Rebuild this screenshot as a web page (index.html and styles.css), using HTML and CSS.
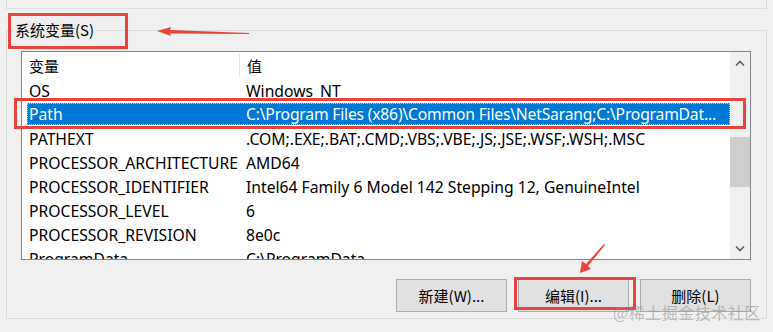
FILE: index.html
```html
<!DOCTYPE html>
<html lang="zh-CN">
<head>
    <meta charset="UTF-8">
    <title>系统变量</title>
    <link rel="stylesheet" href="styles.css">
</head>
<body>
    <div class="prev-group"></div>

    <fieldset class="group">
        <legend>系统变量(S)</legend>

        <div class="listbox">
            <div class="list-body">
                <div class="row head">
                    <span class="col-name">变量</span>
                    <span class="col-value">值</span>
                </div>
                <div class="row"><span>OS</span><span>Windows_NT</span></div>
                <div class="row selected"><span>Path</span><span class="long">C:\Program Files (x86)\Common Files\NetSarang;C:\ProgramDat...</span></div>
                <div class="row"><span>PATHEXT</span><span>.COM;.EXE;.BAT;.CMD;.VBS;.VBE;.JS;.JSE;.WSF;.WSH;.MSC</span></div>
                <div class="row"><span>PROCESSOR_ARCHITECTURE</span><span>AMD64</span></div>
                <div class="row"><span>PROCESSOR_IDENTIFIER</span><span>Intel64 Family 6 Model 142 Stepping 12, GenuineIntel</span></div>
                <div class="row"><span>PROCESSOR_LEVEL</span><span>6</span></div>
                <div class="row"><span>PROCESSOR_REVISION</span><span>8e0c</span></div>
                <div class="row"><span>ProgramData</span><span>C:\ProgramData</span></div>
            </div>
            <div class="scrollbar">
                <div class="sb-arrow">
                    <svg width="10" height="6" viewBox="0 0 10 6"><path d="M1 5.5 L5 1.5 L9 5.5" fill="none" stroke="#606060" stroke-width="1.6"/></svg>
                </div>
                <div class="sb-track">
                    <div class="sb-thumb"></div>
                </div>
                <div class="sb-arrow">
                    <svg width="10" height="6" viewBox="0 0 10 6"><path d="M1 0.5 L5 4.5 L9 0.5" fill="none" stroke="#606060" stroke-width="1.6"/></svg>
                </div>
            </div>
        </div>

        <div class="actions">
            <button>新建(W)...</button>
            <button>编辑(I)...</button>
            <button>删除(L)</button>
        </div>
    </fieldset>

    <!-- annotations -->
    <div class="mark mark-title"></div>
    <div class="mark mark-row"></div>
    <div class="mark mark-edit"></div>

    <svg class="arrow arrow-title" width="100" height="14" viewBox="0 0 100 14">
        <path d="M0 6 L14 2 L13 5 L92 8 L92 9 L13 8.5 L14 11 Z" fill="#e8433f"/>
    </svg>
    <svg class="arrow arrow-edit" width="30" height="32" viewBox="0 0 30 32">
        <path d="M3 30 L5 18 L9 21 L27 1 L28 2 L11 23 L14 26 Z" fill="#e8433f"/>
    </svg>

    <div class="watermark">@稀土掘金技术社区</div>
</body>
</html>
```

FILE: styles.css
```css
body {
    margin: 0;
    background: #f0f0f0;
    font-family: "Noto Sans", "Noto Sans CJK SC", sans-serif;
    font-size: 15.7px;
    color: #000;
    width: 773px;
    height: 332px;
    overflow: hidden;
    position: relative;
}

.prev-group {
    margin: 0 6px;
    height: 8px;
    border: 1px solid #dcdcdc;
    border-top: none;
}

.group {
    margin: 11px 6px 0;
    padding: 0 15px 0 14px;
    height: 299px;
    box-sizing: border-box;
    border: 1px solid #dcdcdc;
    display: flex;
    flex-direction: column;
}

.group legend {
    padding: 0 1px;
    margin-left: -7px;
    line-height: 20px;
    font-size: 15px;
    font-family: "Noto Sans CJK SC", sans-serif;
}

.listbox {
    margin-top: 11px;
    height: 207px;
    border: 1px solid #828790;
    background: #fff;
    display: flex;
    overflow: hidden;
}

.list-body {
    flex: 1;
    overflow: hidden;
}

.row {
    display: grid;
    grid-template-columns: 217px 1fr;
    height: 24px;
    line-height: 25px;
    white-space: nowrap;
}

.row span {
    padding-left: 7px;
    overflow: hidden;
}

.row.head {
    height: 27px;
    line-height: 28px;
    font-size: 15px;
    font-family: "Noto Sans CJK SC", sans-serif;
}

.row.head .col-value {
    border-left: 1px solid #e5e5e5;
    margin: 2px 0;
    line-height: 24px;
}

.row.selected {
    background: #0078d7;
    color: #fff;
    margin: 0 0 2px 5px;
    height: 22px;
    line-height: 23px;
    grid-template-columns: 212px 1fr;
    outline: 1px dotted #9fc9ee;
    outline-offset: -1px;
}

.row.selected span {
    padding-left: 2px;
}

.row.selected span + span {
    padding-left: 7px;
}

.row .long {
    letter-spacing: -0.2px;
}

.scrollbar {
    width: 20px;
    background: #f0f0f0;
    display: flex;
    flex-direction: column;
}

.sb-arrow {
    height: 21px;
    display: flex;
    align-items: center;
    justify-content: center;
}

.sb-track {
    flex: 1;
}

.sb-thumb {
    margin-top: 64px;
    height: 50px;
    background: #cdcdcd;
}

.actions {
    display: flex;
    justify-content: flex-end;
    gap: 11px;
    margin-top: 19px;
}

.actions button {
    width: 111px;
    height: 33px;
    border: 1px solid #adadad;
    background: #e1e1e1;
    font-family: "Noto Sans CJK SC", sans-serif;
    font-size: 15px;
    color: #000;
    padding: 0;
}

.mark {
    position: absolute;
    border: 3px solid #e8433f;
    box-sizing: border-box;
}

.mark-title {
    left: 8px;
    top: 13px;
    width: 120px;
    height: 36px;
}

.mark-row {
    left: 14px;
    top: 98px;
    width: 732px;
    height: 31px;
}

.mark-edit {
    left: 514px;
    top: 277px;
    width: 122px;
    height: 33px;
}

.arrow {
    position: absolute;
}

.arrow-title {
    left: 157px;
    top: 25px;
}

.arrow-edit {
    left: 577px;
    top: 243px;
}

.watermark {
    position: absolute;
    left: 613px;
    top: 300px;
    font-family: "Noto Sans CJK SC", sans-serif;
    font-size: 16px;
    color: rgba(150, 150, 150, 0.6);
    letter-spacing: 0.5px;
}
```
